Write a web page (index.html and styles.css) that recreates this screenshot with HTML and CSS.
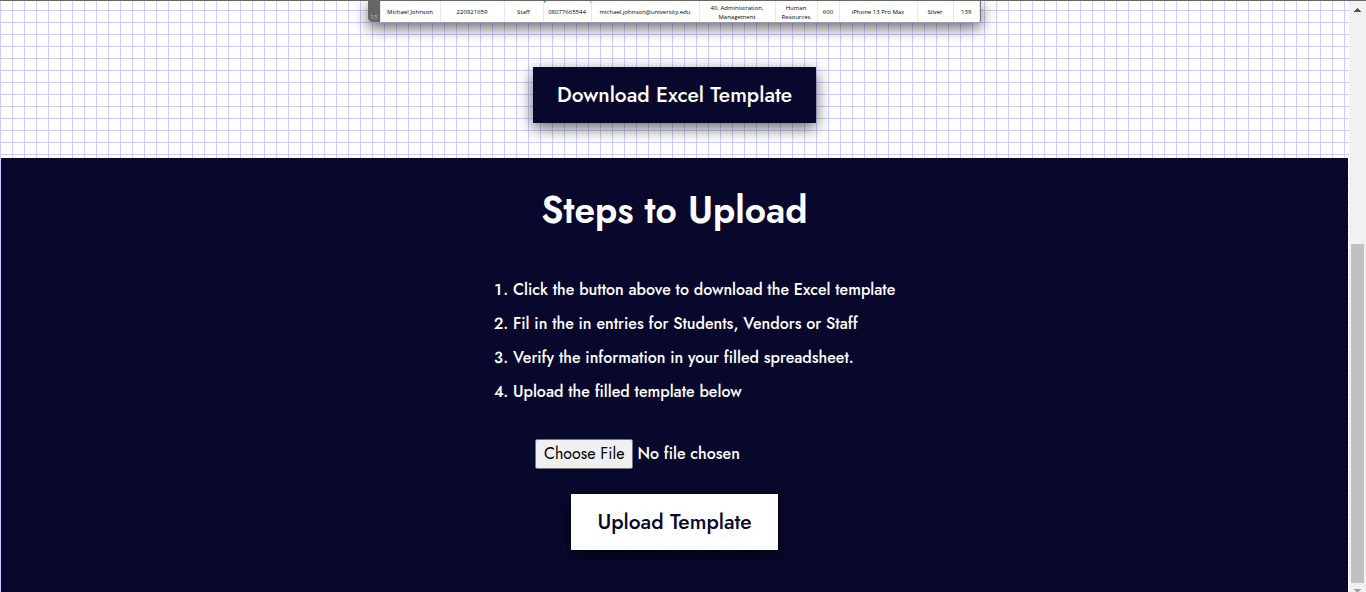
FILE: index.html
```html
<!DOCTYPE html>
<html lang="en">
<head>
<meta charset="utf-8">
<title>Upload Template</title>
<link rel="stylesheet" href="styles.css">
</head>
<body>
<div class="window">
  <main class="page">
    <section class="download">
      <div class="sheet">
        <table class="sheet-table">
          <colgroup>
            <col class="c-num"><col class="c-name"><col class="c-id"><col class="c-role"><col class="c-phone"><col class="c-mail"><col class="c-dept"><col class="c-unit"><col class="c-code"><col class="c-device"><col class="c-color"><col class="c-last">
          </colgroup>
          <tbody>
            <tr>
              <th scope="row">13</th>
              <td>Michael Johnson</td>
              <td>220921659</td>
              <td>Staff</td>
              <td class="flagged">08077665544</td>
              <td>michael.johnson@university.edu</td>
              <td>40, Administration,<br>Management</td>
              <td>Human<br>Resources</td>
              <td>600</td>
              <td>iPhone 13 Pro Max</td>
              <td>Silver</td>
              <td>139</td>
            </tr>
          </tbody>
        </table>
      </div>
      <button class="btn btn-dark" type="button">Download Excel Template</button>
    </section>
    <section class="upload">
      <h1 class="title">Steps to Upload</h1>
      <ol class="steps">
        <li>Click the button above to download the Excel template</li>
        <li>Fil in the in entries for Students, Vendors or Staff</li>
        <li>Verify the information in your filled spreadsheet.</li>
        <li>Upload the filled template below</li>
      </ol>
      <form class="form">
        <input class="file" type="file" aria-label="Filled template">
        <button class="btn btn-light" type="button">Upload Template</button>
      </form>
    </section>
  </main>
  <div class="scrollbar" aria-hidden="true">
    <svg class="arrow" viewBox="0 0 17 17"><path d="M5 11h7v-1h-1V9h-1V8H9V7H8v1H7v1H6v1H5z" fill="#505050"/></svg>
    <div class="track"><div class="thumb"></div></div>
    <svg class="arrow arrow-down" viewBox="0 0 17 9"><path d="M5 6h7v1h-1v1h-1v1H7V8H6V7H5z" fill="#a3a3a3"/></svg>
  </div>
</div>
</body>
</html>
```
FILE: styles.css
```css
* { box-sizing: border-box; }

body {
  margin: 0;
  font-family: Jost, Lato, sans-serif;
  font-weight: 500;
}

.window {
  display: flex;
  height: 100vh;
  border-top: 1px solid #666;
  overflow: hidden;
}

.page {
  flex: 1;
  display: flex;
  flex-direction: column;
  padding: 0 1px;
  background-color: #fff;
  background-image:
    linear-gradient(#ccccff 1px, transparent 1px),
    linear-gradient(90deg, #ccccff 1px, transparent 1px);
  background-size: 12px 12px;
  background-position: 0 9px;
}

.download {
  display: flex;
  flex-direction: column;
  align-items: center;
  gap: 44px;
  padding-bottom: 35px;
}

.sheet {
  width: 613px;
  max-width: 100%;
  overflow: hidden;
  border-right: 1px solid #777;
  border-bottom: 1px solid #9999b8;
  border-radius: 0 0 2px 5px;
  background: #fff;
  box-shadow: 0 5px 15px rgba(0, 0, 0, 0.6);
}

.sheet-table {
  width: 100%;
  table-layout: fixed;
  border-collapse: collapse;
  font: 400 6px/9px "Open Sans", sans-serif;
  color: #000;
}

.sheet-table th,
.sheet-table td {
  height: 21px;
  padding: 2px 0 0;
  border-right: 1px solid #e8e8ec;
  text-align: center;
  white-space: nowrap;
}

.sheet-table th {
  background: #666;
  color: #ccc;
  font-weight: 400;
  vertical-align: bottom;
}

.sheet-table .flagged {
  background: linear-gradient(135deg, #2e8b2e 2px, transparent 2px);
}

.c-num { width: 12px; }
.c-name { width: 60px; }
.c-id { width: 64px; }
.c-role { width: 39px; }
.c-phone { width: 48px; }
.c-mail { width: 108px; }
.c-dept { width: 76px; }
.c-unit { width: 42px; }
.c-code { width: 22px; }
.c-device { width: 78px; }
.c-color { width: 36px; }

.btn {
  height: 56px;
  padding: 0 26px;
  border: 0;
  font: inherit;
  font-size: 21px;
  box-shadow: 0 5px 15px rgba(0, 0, 0, 0.6);
  cursor: pointer;
}

.btn-dark { padding: 0 24px; background: #08082c; color: #fff; }
.btn-light { background: #fff; color: #08082c; }

.upload {
  flex: 1;
  display: flex;
  flex-direction: column;
  align-items: center;
  background: #08082c;
  color: #fff;
}

.title {
  margin: 24px 0 35px;
  font-size: 37px;
  font-weight: 600;
  line-height: 56px;
}

.steps {
  margin: 0;
  padding-left: 40px;
  list-style-position: inside;
  font-size: 16px;
  line-height: 34px;
}

.form {
  display: flex;
  flex-direction: column;
  align-items: center;
  gap: 25px;
  margin-top: 30px;
}

.file {
  width: 279px;
  height: 30px;
  font: inherit;
  font-size: 16px;
  line-height: 24px;
}

.file::file-selector-button {
  height: 30px;
  margin-right: 4px;
  padding: 1px 8px;
  border: 1px solid #767676;
  border-radius: 2px;
  background: #efefef;
  color: #000;
  font: inherit;
  font-weight: 400;
}

.scrollbar {
  display: flex;
  flex-direction: column;
  width: 17px;
  background: #f1f1f1;
}

.arrow { width: 17px; height: 17px; }
.arrow-down { height: 9px; }

.track {
  flex: 1;
  display: flex;
  flex-direction: column;
  justify-content: flex-end;
  padding: 0 2px;
}

.thumb { height: 60%; background: #c1c1c1; }
```
